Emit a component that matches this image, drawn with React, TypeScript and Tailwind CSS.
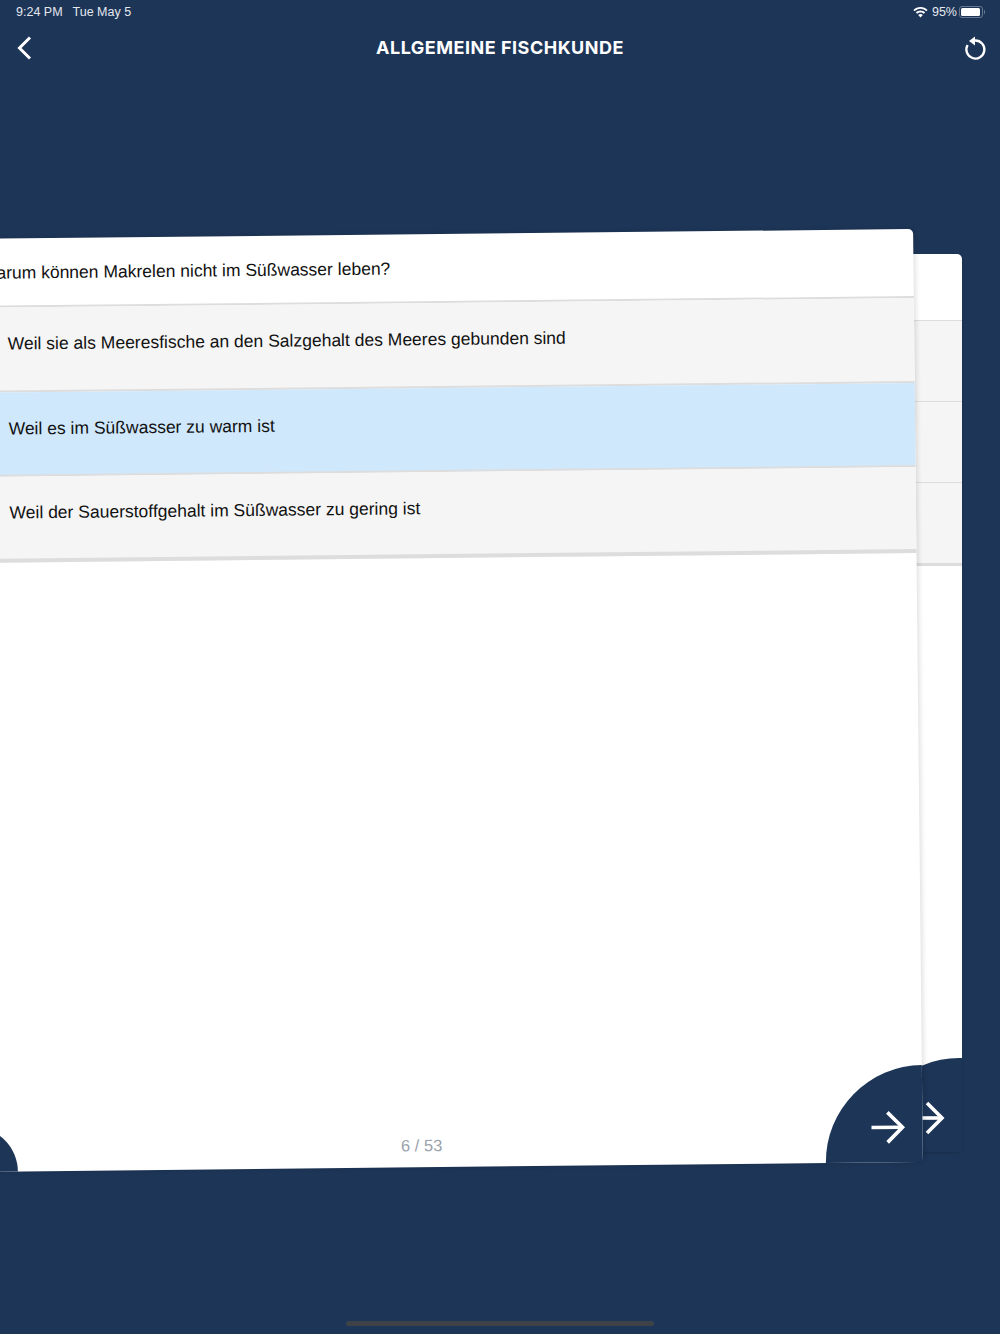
import React from 'react';

const sans = 'font-["Liberation_Sans",Arial,sans-serif]';

const answers = [
  { text: 'Weil sie als Meeresfische an den Salzgehalt des Meeres gebunden sind', selected: false },
  { text: 'Weil es im Süßwasser zu warm ist', selected: true },
  { text: 'Weil der Sauerstoffgehalt im Süßwasser zu gering ist', selected: false },
];

const ArrowIcon = () => (
  <svg width="36" height="34" viewBox="0 0 36 34" fill="none" stroke="white" strokeWidth="3.6">
    <path d="M2 17H33" />
    <path d="M18 2L33 17L18 32" />
  </svg>
);

const WifiIcon = () => (
  <svg width="15" height="11" viewBox="0 0 15 11" fill="white">
    <path d="M7.5 0C4.7 0 2.2 1.1.4 2.9l1.3 1.3C3.2 2.8 5.2 1.8 7.5 1.8s4.3 1 5.8 2.4l1.3-1.3C12.8 1.1 10.3 0 7.5 0z" />
    <path d="M7.5 3.6c-1.8 0-3.4.7-4.6 1.8l1.3 1.3c.9-.8 2-1.3 3.3-1.3s2.4.5 3.3 1.3l1.3-1.3C10.9 4.3 9.3 3.6 7.5 3.6z" />
    <path d="M7.5 7.1c-.9 0-1.7.3-2.3.9l2.3 2.6L9.8 8c-.6-.6-1.4-.9-2.3-.9z" />
  </svg>
);

export default function App() {
  return (
    <div className="w-full h-[1334px] bg-[#1d3557] overflow-hidden flex flex-col">
      {/* status bar */}
      <div className={`h-6 flex items-center justify-between pl-4 pr-[15px] text-[12.5px] text-[#e4e8ee] ${sans}`}>
        <div className="flex gap-[10px]">
          <span>9:24 PM</span>
          <span>Tue May 5</span>
        </div>
        <div className="flex items-center">
          <div className="mr-[4px]">
            <WifiIcon />
          </div>
          <span className="mr-[2px]">95%</span>
          <div className="flex items-center gap-[1px]">
            <div className="w-[24px] h-[12px] rounded-[3px] border border-[#66788f] p-[1px]">
              <div className="w-[19px] h-full rounded-[1.5px] bg-white" />
            </div>
            <div className="w-[1px] h-[4px] rounded-r-sm bg-[#66788f]" />
          </div>
        </div>
      </div>

      {/* nav */}
      <div className="h-12 flex items-center justify-between pl-[17px] pr-[13px]">
        <svg width="15" height="24" viewBox="0 0 15 24" fill="none" stroke="white" strokeWidth="3">
          <path d="M13 1.5L2.5 12L13 22.5" />
        </svg>
        <h1 className={'ml-[5px] text-[18px] leading-6 font-bold tracking-[0.5px] text-white font-["Inter",sans-serif]'}>ALLGEMEINE FISCHKUNDE</h1>
        <svg width="24" height="26" viewBox="0 0 24 26" fill="none">
          <path d="M12 5.5A9 9 0 1 1 4.6 10" stroke="white" strokeWidth="2.3" />
          <path d="M12 1.5L6 6L12 10.5Z" fill="white" />
        </svg>
      </div>

      {/* card stack */}
      <div className="relative flex-1">
        <div className="mt-[182px] ml-auto mr-[38px] w-[900px] h-[898px] bg-white rounded-[5px] flex flex-col shadow-sm">
          <div className="h-[67px] border-b border-[#dddddd]" />
          <div className="h-[81px] bg-[#f5f5f5] border-b border-[#dddddd]" />
          <div className="h-[81px] bg-[#f5f5f5] border-b border-[#dddddd]" />
          <div className="h-[83px] bg-[#f5f5f5] border-b-[3px] border-[#dddddd]" />
          <div className="flex-1" />
          <div className="flex justify-end">
            <div className="w-[97px] h-[94px] rounded-tl-full rounded-br-[5px] bg-[#1d3557] flex items-end justify-end pr-[17px] pb-[17px]">
              <ArrowIcon />
            </div>
          </div>
        </div>

        <div className={`absolute left-[-32px] top-[162px] w-[950px] h-[933px] -rotate-[0.6deg] bg-white rounded-[5px] flex flex-col shadow-[2px_0_5px_rgba(0,0,0,0.12)] ${sans}`}>
          <div className="h-[69px] pl-[17px] pt-[22px] text-[17.5px] leading-6 text-[#111111] border-b-2 border-[#dddddd]">
            Warum können Makrelen nicht im Süßwasser leben?
          </div>
          {answers.map((a, i) => (
            <div
              key={a.text}
              className={`pl-[43.5px] pt-[24px] text-[17.5px] leading-6 text-[#111111] border-[#dddddd] ${i === 2 ? 'h-[86px] border-b-[4px]' : 'h-[84.5px] border-b-2'} ${a.selected ? 'bg-[#cfe8fc]' : 'bg-[#f5f5f5]'}`}
            >
              {a.text}
            </div>
          ))}
          <div className="flex-1" />
          <div className="flex items-end justify-between">
            <div className="w-[45px] h-[45px] rounded-tr-full bg-[#1d3557]" />
            <span className="pb-[10px] text-[16.5px] leading-6 text-[#9aa1ab]">6 / 53</span>
            <div className="w-[97px] h-[97px] rounded-tl-full rounded-br-[5px] bg-[#1d3557] flex items-end justify-end pr-[17px] pb-[18px]">
              <ArrowIcon />
            </div>
          </div>
        </div>
      </div>

      {/* home indicator */}
      <div className="mb-[8px] mx-auto w-[308px] h-[5px] rounded-full bg-[#3f4348]" />
    </div>
  );
}
